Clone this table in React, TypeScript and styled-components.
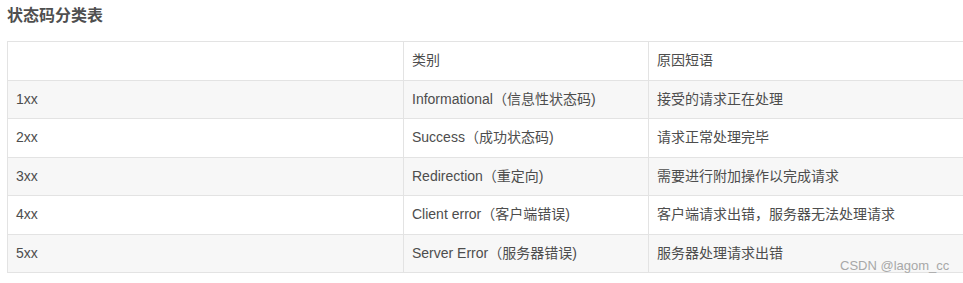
import React from "react";
import styled, { createGlobalStyle } from "styled-components";

const Global = createGlobalStyle`
  html, body { margin: 0; padding: 0; background: #fff; overflow: hidden; }
  body { font-family: "Liberation Sans", "Noto Sans CJK SC", sans-serif; color: #4d4d4d; }
`;

const Page = styled.div`
  position: relative;
  width: 963px;
  height: 283px;
  overflow: hidden;
  padding: 4px 0 0 7px;
  box-sizing: border-box;
`;

const Title = styled.h3`
  margin: 0 0 17px 0;
  font-size: 16px;
  line-height: 20px;
  font-weight: bold;
  color: #4f4f4f;
  font-family: "Noto Sans CJK SC", sans-serif;
`;

const Table = styled.table`
  border-collapse: collapse;
  width: 970px;
  table-layout: fixed;
  font-size: 14px;
`;

const Row = styled.tr<{ $shade: boolean }>`
  background: ${(p) => (p.$shade ? "#f7f7f7" : "#fff")};
`;

const Cell = styled.td<{ $w?: number }>`
  border: 1px solid #e3e3e3;
  padding: 8px 8px 8px 8px;
  height: 21.5px;
  line-height: 21.5px;
  color: #4d4d4d;
  white-space: nowrap;
  ${(p) => (p.$w ? `width: ${p.$w}px;` : "")}
`;

const Watermark = styled.div`
  position: absolute;
  left: 840px;
  top: 258px;
  font-size: 13px;
  color: #a8a8a8;
  font-family: "Liberation Sans", sans-serif;
`;

const rows = [
  ["1xx", "Informational（信息性状态码)", "接受的请求正在处理"],
  ["2xx", "Success（成功状态码)", "请求正常处理完毕"],
  ["3xx", "Redirection（重定向)", "需要进行附加操作以完成请求"],
  ["4xx", "Client error（客户端错误)", "客户端请求出错，服务器无法处理请求"],
  ["5xx", "Server Error（服务器错误)", "服务器处理请求出错"],
];

export default function App() {
  return (
    <>
      <Global />
      <Page>
        <Title>状态码分类表</Title>
        <Table>
          <tbody>
            <Row $shade={false}>
              <Cell $w={379}></Cell>
              <Cell $w={228}>类别</Cell>
              <Cell>原因短语</Cell>
            </Row>
            {rows.map((r, i) => (
              <Row key={r[0]} $shade={i % 2 === 0}>
                <Cell>{r[0]}</Cell>
                <Cell>{r[1]}</Cell>
                <Cell>{r[2]}</Cell>
              </Row>
            ))}
          </tbody>
        </Table>
        <Watermark>CSDN @lagom_cc</Watermark>
      </Page>
    </>
  );
}
